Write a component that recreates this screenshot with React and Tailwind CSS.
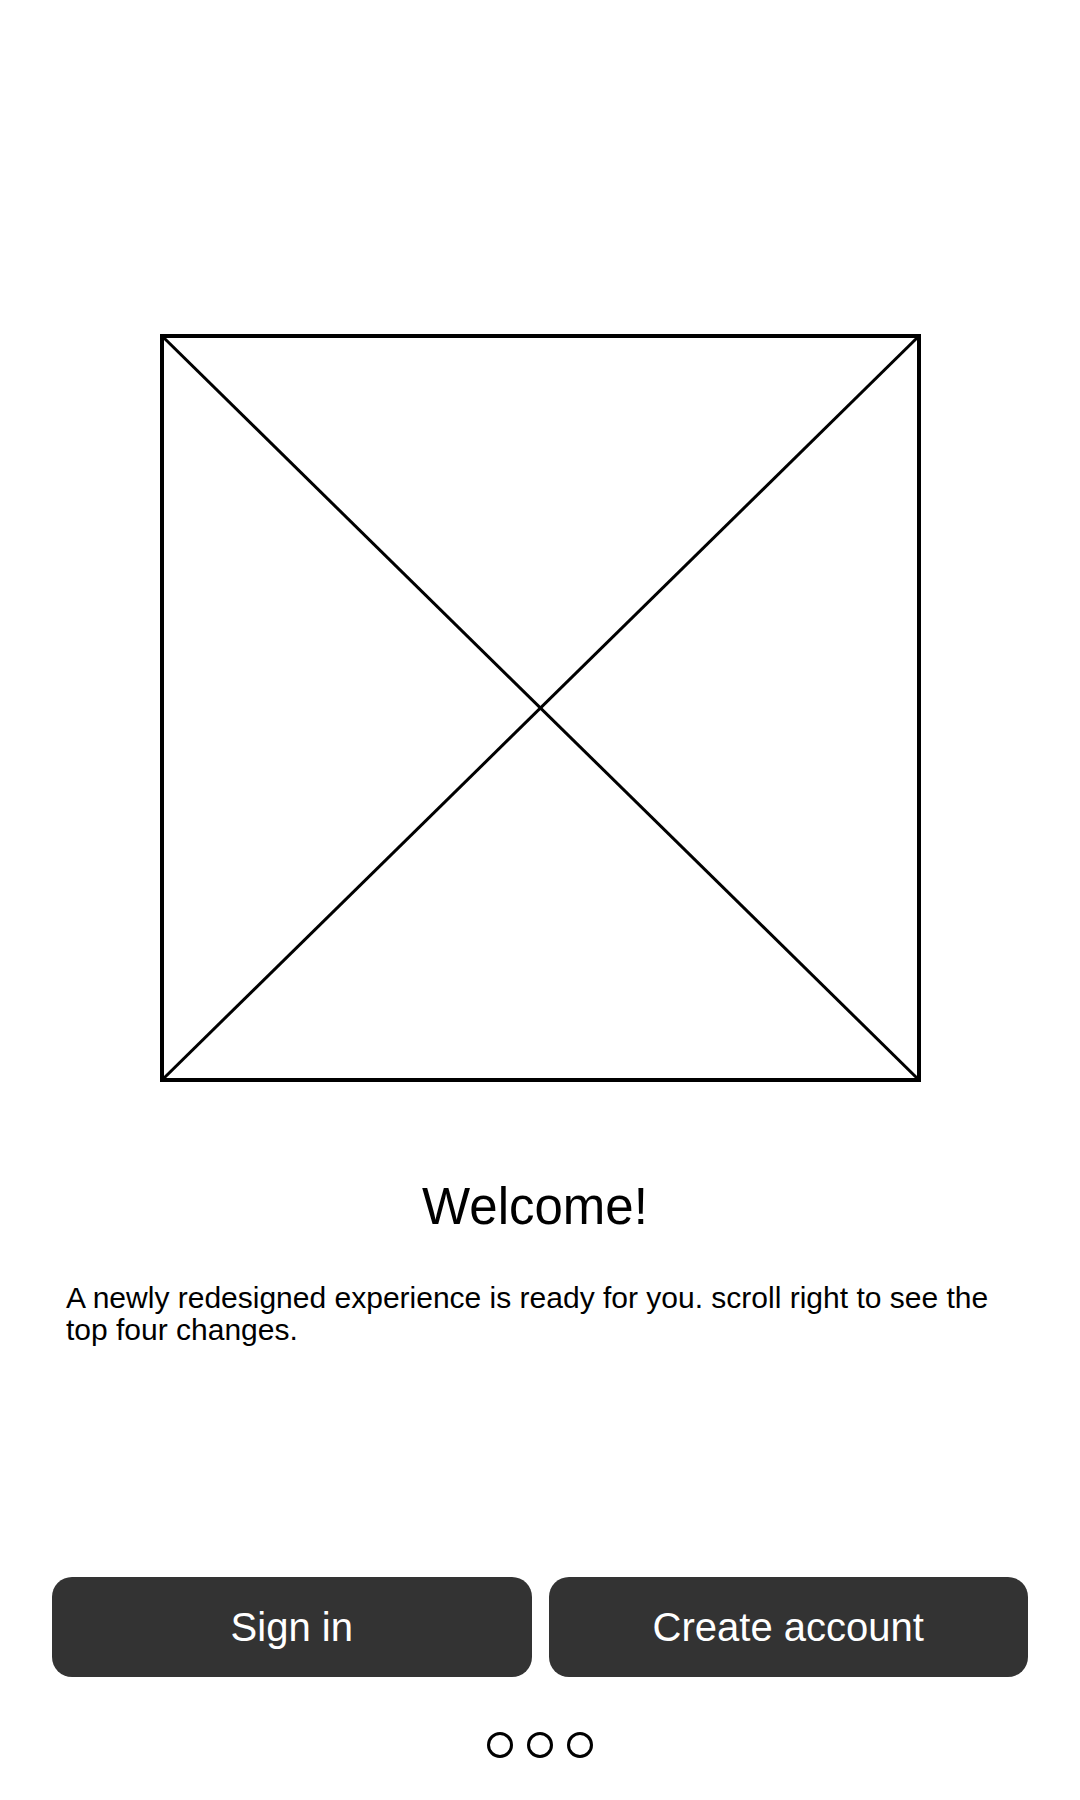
export default function App() {
  return (
    <div className="w-[1080px] h-[1800px] bg-white flex flex-col items-center" style={{ fontFamily: '"Liberation Sans", Arial, sans-serif' }}>
      <div className="mt-[334px] w-[761px] h-[748px] border-4 border-black relative">
        <svg className="absolute inset-0 w-full h-full" viewBox="0 0 753 740" preserveAspectRatio="none">
          <line x1="0" y1="0" x2="753" y2="740" stroke="#000" strokeWidth="3" />
          <line x1="753" y1="0" x2="0" y2="740" stroke="#000" strokeWidth="3" />
        </svg>
      </div>
      <div className="mt-[99px] w-full pr-[10px] text-center text-[51px] leading-none text-black">Welcome!</div>
      <p className="mt-[50px] w-full px-[66px] text-[30px] leading-[32px] text-black">
        A newly redesigned experience is ready for you. scroll right to see the top four changes.
      </p>
      <div className="mt-[231px] w-full px-[52px] flex gap-[17px]">
        <button className="w-[480px] h-[100px] rounded-[20px] bg-[#333333] text-white text-[40px]">Sign in</button>
        <button className="w-[480px] h-[100px] rounded-[20px] bg-[#333333] text-white text-[40px]">Create account</button>
      </div>
      <div className="mt-[55px] flex gap-[14px]">
        <div className="w-[26px] h-[26px] rounded-full border-[3px] border-black" />
        <div className="w-[26px] h-[26px] rounded-full border-[3px] border-black" />
        <div className="w-[26px] h-[26px] rounded-full border-[3px] border-black" />
      </div>
    </div>
  );
}
